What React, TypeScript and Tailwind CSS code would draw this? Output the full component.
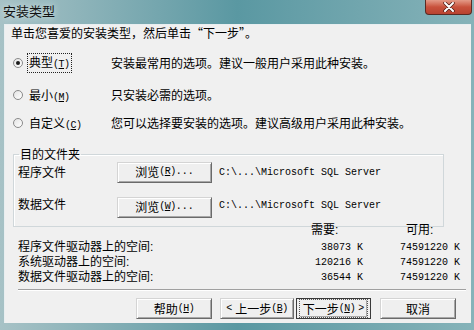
import React from 'react';

const cjk = "font-['Noto_Sans_CJK_SC','Noto_Sans',sans-serif]";
const mono = "font-['Liberation_Mono','DejaVu_Sans_Mono',monospace]";
const tight = "font-['Liberation_Sans','Noto_Sans_CJK_SC',sans-serif]";

const Key: React.FC<{ k: string }> = ({ k }) => (
    <span className={`${mono} text-[10px] tracking-[-0.5px]`}>
        (<span className="underline">{k}</span>)
    </span>
);

const Radio: React.FC<{ checked?: boolean }> = ({ checked }) => (
    <span className="w-[10px] h-[10px] rounded-full border border-[#8a8a8a] bg-gradient-to-br from-[#e4e4e4] to-white flex items-center justify-center">
        {checked && <span className="w-[4px] h-[4px] rounded-full bg-[#1a1a1a]" />}
    </span>
);

const Btn: React.FC<{ w: string; focus?: boolean; children: React.ReactNode }> = ({ w, focus, children }) => (
    <div
        className={`${w} h-[21px] flex items-center justify-center text-[12px] leading-none text-black bg-[#efefef] border ${
            focus
                ? 'border-[#3a3a3a]'
                : 'border-t-[#d4d4d4] border-l-[#d4d4d4] border-r-[#6a6a6a] border-b-[#6a6a6a] shadow-[inset_1px_1px_0_#ffffff,inset_-1px_-1px_0_#a8a8a8]'
        }`}
    >
        {focus ? (
            <div className="w-full h-full border border-dotted border-[#555] m-[2px] flex items-center justify-center shadow-[inset_-1px_-1px_0_#a8a8a8]">
                {children}
            </div>
        ) : (
            children
        )}
    </div>
);

const spaceRows = [
    { label: '程序文件驱动器上的空间:', need: '38073 K', free: '74591220 K' },
    { label: '系统驱动器上的空间:', need: '120216 K', free: '74591220 K' },
    { label: '数据文件驱动器上的空间:', need: '36544 K', free: '74591220 K' },
];

const App: React.FC = () => {
    return (
        <div className={`w-[474px] h-[330px] bg-gradient-to-r from-[#a7c2c6] via-[#5a98a2] to-[#86b3b9] flex flex-col ${cjk} text-black`}>
            {/* Title bar */}
            <div className="h-[24px] flex items-start justify-between pl-[3px] pr-[2px]">
                <span className="text-[13px] leading-[22px] text-[#111] [text-shadow:0_0_6px_#e8f2f3]">安装类型</span>
                <div className="w-[47px] h-[15px] rounded-b-[4px] border border-t-0 border-[#5a2a22] bg-gradient-to-b from-[#e39a88] via-[#c8513c] to-[#b84330] flex items-center justify-center">
                    <svg width="12" height="10" viewBox="0 0 12 10">
                        <path d="M2 1 L10 9 M10 1 L2 9" stroke="#4a1a14" strokeWidth="3.4" strokeLinecap="round" />
                        <path d="M2 1 L10 9 M10 1 L2 9" stroke="#ffffff" strokeWidth="2" strokeLinecap="round" />
                    </svg>
                </div>
            </div>

            {/* Content panel */}
            <div className="mx-[3px] ml-[4px] h-[299px] bg-[#f0f0f0] border-t border-l border-[#e8eef0] flex flex-col text-[12px]">
                <div className="h-[16px] leading-[16px] pl-[6px]">单击您喜爱的安装类型，然后单击“下一步”。</div>

                {/* Radio options */}
                <div className="mt-[13px] h-[18px] flex items-center">
                    <div className="w-[22px] pl-[8px] flex items-center"><Radio checked /></div>
                    <div className="w-[84px] flex items-center">
                        <span className="border border-dotted border-[#222] px-[1px] leading-[15px]">典型<Key k="T" /></span>
                    </div>
                    <span className="leading-[16px]">安装最常用的选项。建议一般用户采用此种安装。</span>
                </div>
                <div className="mt-[14px] h-[18px] flex items-center">
                    <div className="w-[22px] pl-[8px] flex items-center"><Radio /></div>
                    <div className="w-[84px] pl-[2px]">最小<Key k="M" /></div>
                    <span>只安装必需的选项。</span>
                </div>
                <div className="mt-[10px] h-[18px] flex items-center">
                    <div className="w-[22px] pl-[8px] flex items-center"><Radio /></div>
                    <div className="w-[84px] pl-[2px]">自定义<Key k="C" /></div>
                    <span>您可以选择要安装的选项。建议高级用户采用此种安装。</span>
                </div>

                {/* Destination folder */}
                <fieldset className="mt-[14px] ml-[8px] w-[431px] border border-[#d0d7da] shadow-[inset_1px_1px_0_#ffffff] pb-[9px]">
                    <legend className="ml-[5px] px-[1px] leading-[16px]">目的文件夹</legend>
                    <div className="h-[20px] flex items-center pl-[4px]">
                        <span className="w-[99px]">程序文件</span>
                        <Btn w="w-[95px]">浏览<Key k="R" /><span className={`${mono} text-[10px]`}>...</span></Btn>
                        <span className={`${mono} text-[10px] ml-[7px]`}>C:\...\Microsoft SQL Server</span>
                    </div>
                    <div className="mt-[15px] h-[20px] flex items-center pl-[4px]">
                        <span className="w-[99px] -mt-[6px]">数据文件</span>
                        <Btn w="w-[95px]">浏览<Key k="W" /><span className={`${mono} text-[10px]`}>...</span></Btn>
                        <span className={`${mono} text-[10px] ml-[7px] -mt-[4px]`}>C:\...\Microsoft SQL Server</span>
                    </div>
                </fieldset>

                {/* Disk space */}
                <div className={`-mt-[3px] pl-[13px] grid grid-cols-[230px_115px_97px] h-[13px] leading-[13px] ${tight}`}>
                    <span />
                    <span className="pl-[63px]">需要:</span>
                    <span className="pl-[43px]">可用:</span>
                </div>
                <div className={`mt-[3px] pl-[13px] flex flex-col ${tight}`}>
                    {spaceRows.map((r) => (
                        <div key={r.label} className="grid grid-cols-[230px_115px_97px] h-[15px] items-center leading-[15px]">
                            <span className="text-[12px]">{r.label}</span>
                            <span className={`${mono} text-[10px] text-right`}>{r.need}</span>
                            <span className={`${mono} text-[10px] text-right`}>{r.free}</span>
                        </div>
                    ))}
                </div>

                <div className="mt-[4px] ml-[13px] mr-[5px] h-[2px] border-t border-[#a0a0a0] border-b border-b-white" />

                {/* Buttons */}
                <div className="mt-[7px] flex justify-end pr-[15px]">
                    <Btn w="w-[76px]">帮助<Key k="H" /></Btn>
                    <div className="w-[8px]" />
                    <Btn w="w-[74px]"><span className={`${mono} text-[10px] mr-[3px]`}>&lt;</span>上一步<Key k="B" /></Btn>
                    <div className="w-[2px]" />
                    <Btn w="w-[75px]" focus>下一步<Key k="N" /><span className={`${mono} text-[10px] ml-[3px]`}>&gt;</span></Btn>
                    <div className="w-[9px]" />
                    <Btn w="w-[76px]">取消</Btn>
                </div>
            </div>
        </div>
    );
};

export default App;
